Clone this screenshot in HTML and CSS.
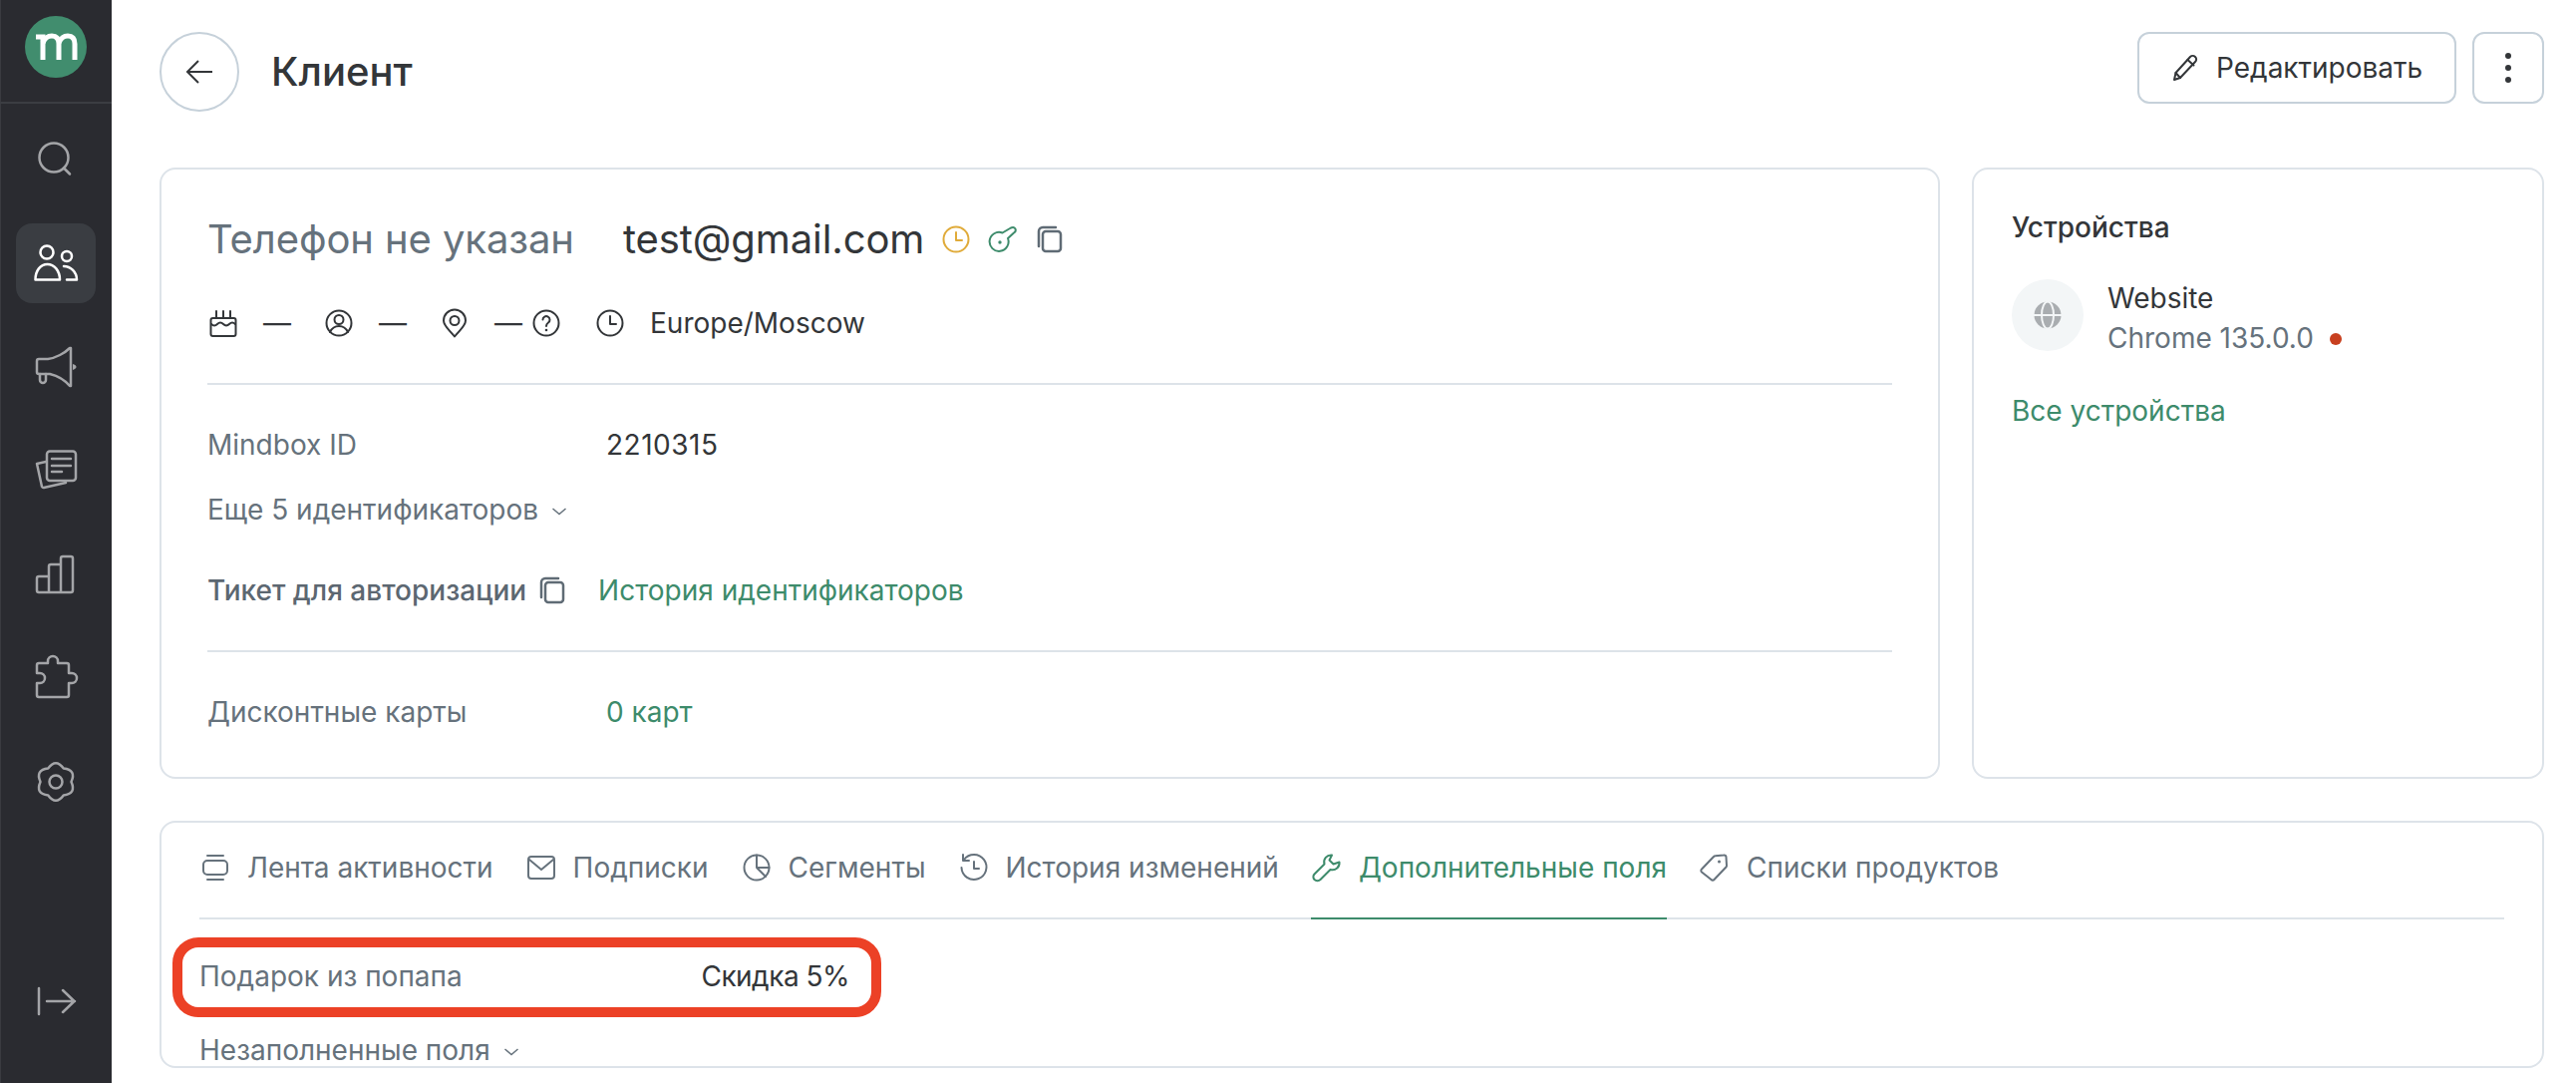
FILE: index.html
```html
<!DOCTYPE html>
<html lang="ru">
<head>
    <meta charset="UTF-8">
    <title>Клиент</title>
    <link rel="stylesheet" href="styles.css">
</head>
<body>
    <nav class="sidebar">
        <div class="logo-wrap">
            <svg class="logo" width="62" height="62" viewBox="0 0 62 62" fill="none" stroke="#fff" stroke-width="5">
                <circle cx="31" cy="31" r="31" fill="#418d6e" stroke="none"/>
                <path d="M11 21h7v23"/>
                <path d="M18 27c2-5 5-7 9-7 5 0 7 3 7 8v16"/>
                <path d="M34 27c2-5 5-7 9-7 5 0 7 3 7 8v16"/>
            </svg>
        </div>
        <a class="nav-item nav-search">
            <svg width="48" height="48" viewBox="0 0 48 48"><circle cx="22" cy="24" r="14.5"/><path d="M32 34.5l6 6"/></svg>
        </a>
        <a class="nav-item active">
            <svg width="48" height="48" viewBox="0 0 48 48"><circle cx="15" cy="13" r="6.5"/><circle cx="35" cy="17" r="5"/><path d="M3.5 40.5c0-9 5-15.5 12-15.5s12.5 6.500 12.500 15.500z"/><path d="M32 27c7 0 13 6 13 13.500H35"/></svg>
        </a>
        <a class="nav-item">
            <svg width="48" height="48" viewBox="0 0 48 48"><path d="M39 5h-1c-5 5-14 10-22 11H7a2 2 0 0 0-2 2v11a2 2 0 0 0 2 2h11c8 2 15 6 20 12h1z"/><path d="M8 31v6a3 3 0 0 0 6 0v-6"/><path class="fill" d="M41 21c3 1 3.500 2 3.500 3s-1 2-3.500 3z"/></svg>
        </a>
        <a class="nav-item">
            <svg width="48" height="48" viewBox="0 0 48 48"><rect x="15" y="4.500" width="29" height="29.500" rx="3"/><path d="M20 12h19M20 19h19M20 25h10"/><path d="M14 15l-9 2 5 23a2 2 0 0 0 2 1l22-5"/></svg>
        </a>
        <a class="nav-item">
            <svg width="48" height="48" viewBox="0 0 48 48"><path d="M17 42H7a2 2 0 0 1-2-2V28a2 2 0 0 1 2-2h10zM17 42V16a2 2 0 0 1 2-2h10v28zM29 42V8a2 2 0 0 1 2-2h8a2 2 0 0 1 2 2v32a2 2 0 0 1-2 2z"/></svg>
        </a>
        <a class="nav-item">
            <svg width="48" height="48" viewBox="0 0 48 48"><path d="M7 43a2 2 0 0 1-2-2V29h3a5 5 0 0 0 0-10H5v-8a2 2 0 0 1 2-2h9V7a5 5 0 0 1 10 0v2h9a2 2 0 0 1 2 2v8h3a5 5 0 0 1 0 10h-3v12a2 2 0 0 1-2 2z"/></svg>
        </a>
        <a class="nav-item">
            <svg width="48" height="48" viewBox="0 0 48 48"><path d="M16.250 10.600Q24 0 31.750 10.600 44.800 12 39.500 24 44.800 36 31.750 37.400 24 48 16.250 37.400 3.200 36 8.500 24 3.200 12 16.250 10.600z"/><circle cx="24" cy="24" r="6.500"/></svg>
        </a>
        <a class="nav-item nav-exit">
            <svg width="48" height="48" viewBox="0 0 48 48"><path d="M7 11v26M15 24h28M31 13l11.500 11L31 35"/></svg>
        </a>
    </nav>

    <main class="content">
        <header class="page-header">
            <button class="back-btn">
                <svg width="32" height="32" viewBox="0 0 32 32"><path d="M29 16H4M15 5L4 16l11 11"/></svg>
            </button>
            <h1>Клиент</h1>
            <div class="header-actions">
                <button class="btn btn-edit">
                    <svg class="icon" width="32" height="32" viewBox="0 0 32 32"><path d="M5 28l1.500-7L21 5c1.500-1.500 3.500-1.500 5 0s1.500 3.500 0 5L11 26z"/><path d="M18.500 8l6 5.500M6.500 21l4.500 5"/></svg>
                    Редактировать
                </button>
                <button class="btn btn-more"><span></span><span></span><span></span></button>
            </div>
        </header>

        <section class="top-grid">
            <div class="card client-card">
                <div class="contact-row">
                    <span class="phone">Телефон не указан</span>
                    <span class="email">test@gmail.com</span>
                    <svg class="icon amber" width="32" height="32" viewBox="0 0 32 32"><circle cx="16" cy="16" r="12.500"/><path d="M16 9v8h6"/></svg>
                    <svg class="icon green" width="32" height="32" viewBox="0 0 32 32"><path d="M15.500 9.500L24 4.500Q27 3 28.500 5.500 29.500 8 27 9.500L21 15A9.500 9.500 0 1 1 15.500 9.500z"/><circle class="fill" cx="13" cy="19" r="1.700"/></svg>
                    <svg class="icon muted copy" width="32" height="32" viewBox="0 0 32 32"><rect x="9" y="8" width="18" height="20" rx="3"/><path d="M5 23V8a4 4 0 0 1 4-4h13"/></svg>
                </div>

                <div class="meta-row">
                    <div class="meta-item">
                        <svg class="icon" width="32" height="32" viewBox="0 0 32 32"><rect x="3.500" y="11" width="25" height="18" rx="2"/><path d="M9 4v7M16 4v7M23 4v7M4 17q3 3 6 0t6 0 6 0 6 0"/></svg>
                        <span>—</span>
                    </div>
                    <div class="meta-item">
                        <svg class="icon" width="32" height="32" viewBox="0 0 32 32"><circle cx="16" cy="16" r="12.500"/><circle cx="16" cy="12.500" r="4.500"/><path d="M7 25c2-4 5-6 9-6s7 2 9 6"/></svg>
                        <span>—</span>
                    </div>
                    <div class="meta-item">
                        <svg class="icon" width="32" height="32" viewBox="0 0 32 32"><path d="M16 29.500C11 23 5 19 5 13.500a11 11 0 0 1 22 0C27 19 21 23 16 29.500z"/><circle cx="16" cy="13.500" r="4.500"/></svg>
                        <span>—</span>
                        <svg class="icon meta-help" width="32" height="32" viewBox="0 0 32 32"><circle cx="16" cy="16" r="12.500"/><path d="M12.500 12.500a3.500 3.500 0 1 1 5.500 3c-1.500 1-2 2-2 3.500"/><circle class="fill" cx="16" cy="23" r="1.300"/></svg>
                    </div>
                    <div class="meta-item">
                        <svg class="icon" width="32" height="32" viewBox="0 0 32 32"><circle cx="16" cy="16" r="12.500"/><path d="M16 9v8h6"/></svg>
                        <span>Europe/Moscow</span>
                    </div>
                </div>

                <div class="divider"></div>

                <div class="info-row first">
                    <span class="info-label">Mindbox ID</span>
                    <span class="id-value">2210315</span>
                </div>
                <div class="more-link ids-more">
                    Еще 5 идентификаторов
                    <svg class="chevron" width="16" height="16" viewBox="0 0 16 16"><path d="M1.500 6L8 11.500 14.500 6"/></svg>
                </div>
                <div class="ticket-row">
                    <span class="ticket-label">Тикет для авторизации</span>
                    <svg class="icon muted copy" width="32" height="32" viewBox="0 0 32 32"><rect x="9" y="8" width="18" height="20" rx="3"/><path d="M5 23V8a4 4 0 0 1 4-4h13"/></svg>
                    <a class="link ticket-link">История идентификаторов</a>
                </div>

                <div class="divider"></div>

                <div class="info-row">
                    <span class="info-label">Дисконтные карты</span>
                    <a class="link">0 карт</a>
                </div>
            </div>

            <aside class="card devices-card">
                <div class="devices-title">Устройства</div>
                <div class="device">
                    <div class="device-icon">
                        <svg width="28" height="28" viewBox="0 0 28 28"><circle class="globe" cx="14" cy="14" r="13.500"/><ellipse class="globe-line" cx="14" cy="14" rx="6" ry="13.500"/><path class="globe-line" d="M0 14h28"/></svg>
                    </div>
                    <div class="device-info">
                        <div>Website</div>
                        <div class="device-sub">Chrome 135.0.0 <i class="status-dot"></i></div>
                    </div>
                </div>
                <a class="link devices-link">Все устройства</a>
            </aside>
        </section>

        <section class="card details-card">
            <div class="tabs">
                <a class="tab">
                    <svg class="icon" width="32" height="32" viewBox="0 0 32 32"><rect x="4" y="9" width="24" height="14" rx="4"/><path d="M8 4h16M8 28h16"/></svg>
                    Лента активности
                </a>
                <a class="tab">
                    <svg class="icon" width="32" height="32" viewBox="0 0 32 32"><rect x="3" y="5" width="26" height="22" rx="3"/><path d="M4 8l12 10L28 8"/></svg>
                    Подписки
                </a>
                <a class="tab">
                    <svg class="icon" width="32" height="32" viewBox="0 0 32 32"><circle cx="16" cy="16" r="12.500"/><path d="M16 3.500V16l9 9M16 16h12.500"/></svg>
                    Сегменты
                </a>
                <a class="tab">
                    <svg class="icon" width="32" height="32" viewBox="0 0 32 32"><path d="M6 8a12.500 12.500 0 1 1-2.500 8"/><path d="M5 3v6h6M16 10v7h5"/></svg>
                    История изменений
                </a>
                <a class="tab active">
                    <svg class="icon" width="32" height="32" viewBox="0 0 32 32"><path d="M21 3.500L18.500 8.500 22.500 12.500 28.500 10.500C29 15 25 19.500 19.500 18L9.500 28C8 29.500 5 29.500 3.500 28 2 26.500 2 24 3.500 22.500L13.500 12.500C12 7.500 16 3 21 3.500z"/></svg>
                    Дополнительные поля
                </a>
                <a class="tab">
                    <svg class="icon" width="32" height="32" viewBox="0 0 32 32"><path d="M3 17.500L15 5a2 2 0 0 1 1.500-.7L25 3.500a2 2 0 0 1 2.500 2L28 14a2 2 0 0 1-.6 1.500L15.500 28a2 2 0 0 1-3 0L3 20.500a2 2 0 0 1 0-3z"/><circle class="fill" cx="20.500" cy="10" r="1.500"/></svg>
                    Списки продуктов
                </a>
            </div>

            <div class="field-row">
                <span class="info-label">Подарок из попапа</span>
                <span class="field-value">Скидка 5%</span>
            </div>
            <div class="more-link">
                Незаполненные поля
                <svg class="chevron" width="16" height="16" viewBox="0 0 16 16"><path d="M1.500 6L8 11.500 14.500 6"/></svg>
            </div>
            <div class="highlight"></div>
        </section>
    </main>
</body>
</html>
```
FILE: styles.css
```css
* {
    margin: 0;
    padding: 0;
    box-sizing: border-box;
    font-family: 'Inter', 'Noto Sans', sans-serif;
}

body {
    background: #ffffff;
    color: #333639;
    font-size: 28px;
    line-height: 40px;
    display: flex;
    height: 1086px;
    overflow: hidden;
}

svg {
    display: block;
    flex-shrink: 0;
}

button {
    background: #ffffff;
    color: inherit;
    font-size: inherit;
}

/* sidebar */
.sidebar {
    width: 112px;
    height: 100%;
    flex-shrink: 0;
    background: #2a2b30;
    box-shadow: inset 1px 0 0 #3a3b40;
    display: flex;
    flex-direction: column;
    align-items: center;
}

.logo-wrap {
    width: 100%;
    height: 104px;
    padding-top: 16px;
    border-bottom: 2px solid #3b3d42;
    display: flex;
    justify-content: center;
}

.nav-item {
    width: 80px;
    height: 80px;
    margin-top: 24px;
    border-radius: 16px;
    display: flex;
    align-items: center;
    justify-content: center;
}

.nav-item svg {
    fill: none;
    stroke: #a4a5a8;
    stroke-width: 2.5;
    stroke-linecap: round;
    stroke-linejoin: round;
}

.nav-item svg .fill {
    fill: #a4a5a8;
    stroke: none;
}

.nav-item.active {
    background: #3a3d42;
}

.nav-item.active svg {
    stroke: #ffffff;
}

.nav-search {
    margin-top: 14px;
    margin-bottom: 2px;
}

.nav-exit {
    margin-top: auto;
    margin-bottom: 42px;
}

/* content */
.content {
    flex: 1;
    min-width: 0;
    padding: 32px 32px 0 48px;
}

.page-header {
    display: flex;
    align-items: center;
    height: 80px;
    margin-bottom: 56px;
}

.back-btn {
    width: 80px;
    height: 80px;
    border: 2px solid #c6d1da;
    border-radius: 50%;
    display: flex;
    align-items: center;
    justify-content: center;
}

.back-btn svg {
    fill: none;
    stroke: #333639;
    stroke-width: 2;
}

h1 {
    margin-left: 32px;
    font-size: 40px;
    font-weight: 500;
    line-height: 48px;
}

.header-actions {
    margin-left: auto;
    align-self: flex-start;
    display: flex;
    gap: 16px;
}

.btn {
    height: 72px;
    border: 2px solid #c6d1da;
    border-radius: 12px;
    display: flex;
    align-items: center;
}

.btn-edit {
    width: 320px;
    padding-left: 30px;
    gap: 15px;
}

.btn-more {
    width: 72px;
    flex-direction: column;
    justify-content: center;
    gap: 6px;
}

.btn-more span {
    width: 6px;
    height: 6px;
    border-radius: 50%;
    background: #333639;
}

.icon {
    fill: none;
    stroke: currentColor;
    stroke-width: 2;
    stroke-linecap: round;
    stroke-linejoin: round;
}

.icon .fill {
    fill: currentColor;
    stroke: none;
}

.amber {
    color: #e0ab3a;
}

.green {
    color: #3d8b6b;
}

.muted {
    color: #5f6b75;
}

.copy {
    stroke-width: 2.5;
}

.link {
    color: #3d8b6b;
}

.top-grid {
    display: grid;
    grid-template-columns: 1786px 574px;
    gap: 32px;
    height: 613px;
    margin-bottom: 42px;
}

.card {
    border: 2px solid #dde3e9;
    border-radius: 16px;
    background: #ffffff;
}

.client-card {
    padding: 46px 46px 0 46px;
}

.contact-row {
    display: flex;
    align-items: center;
    height: 48px;
}

.phone {
    font-size: 40px;
    color: #66727c;
    width: 417px;
    letter-spacing: -0.1px;
}

.email {
    font-size: 40px;
    margin-right: 16px;
    letter-spacing: -0.1px;
}

.contact-row .icon {
    margin-right: 15px;
}

.meta-row {
    display: flex;
    gap: 32px;
    margin-top: 44px;
    height: 32px;
    align-items: center;
}

.meta-item {
    display: flex;
    align-items: center;
    gap: 24px;
}

.meta-help {
    margin-left: -16px;
}

.divider {
    height: 2px;
    background: #dde3e9;
    margin-top: 44px;
}

.info-row {
    display: grid;
    grid-template-columns: 400px auto;
    justify-content: start;
    margin-top: 40px;
}

.info-label {
    color: #66727c;
}

.id-value {
    letter-spacing: 0.5px;
}

.more-link {
    display: flex;
    align-items: center;
    gap: 13px;
    color: #66727c;
}

.ids-more {
    margin-top: 25px;
}

.chevron {
    fill: none;
    stroke: #66727c;
    stroke-width: 1.5;
    margin-top: 2px;
}

.ticket-row {
    display: flex;
    align-items: center;
    margin-top: 41px;
    margin-bottom: 40px;
}

.ticket-label {
    color: #5c6771;
    font-weight: 500;
    margin-right: 10px;
}

.ticket-link {
    margin-left: 30px;
}

.ticket-row + .divider {
    margin-top: 0;
}

.devices-card {
    padding: 38px;
}

.devices-title {
    font-weight: 500;
}

.device {
    display: flex;
    align-items: center;
    gap: 24px;
    margin-top: 25px;
}

.device-icon {
    width: 72px;
    height: 72px;
    border-radius: 50%;
    background: #f3f6f7;
    display: flex;
    align-items: center;
    justify-content: center;
}

.device-info {
    padding-top: 6px;
}

.globe {
    fill: #a9adb0;
}

.globe-line {
    fill: none;
    stroke: #f3f6f7;
    stroke-width: 2;
}

.device-sub {
    color: #66727c;
}

.status-dot {
    display: inline-block;
    width: 12px;
    height: 12px;
    border-radius: 50%;
    background: #c8401f;
    margin-left: 8px;
    vertical-align: 3px;
}

.devices-link {
    display: block;
    margin-top: 33px;
}

/* details */
.details-card {
    position: relative;
    height: 248px;
    overflow: hidden;
    padding: 0 38px;
}

.tabs {
    display: flex;
    gap: 32px;
    height: 97px;
    border-bottom: 2px solid #dde3e9;
}

.tab {
    display: flex;
    align-items: center;
    gap: 16px;
    height: 97px;
    padding-bottom: 5px;
    border-bottom: 2px solid transparent;
    color: #66727c;
}

.tab.active {
    color: #3d8b6b;
    border-bottom-color: #3d8b6b;
}

.field-row {
    display: flex;
    justify-content: space-between;
    width: 652px;
    margin-top: 37px;
}

.field-value {
    letter-spacing: -0.5px;
}

.details-card .more-link {
    margin-top: 34px;
}

.highlight {
    position: absolute;
    left: 11px;
    top: 115px;
    width: 711px;
    height: 80px;
    border: 10px solid #ec4126;
    border-radius: 26px;
}
```
